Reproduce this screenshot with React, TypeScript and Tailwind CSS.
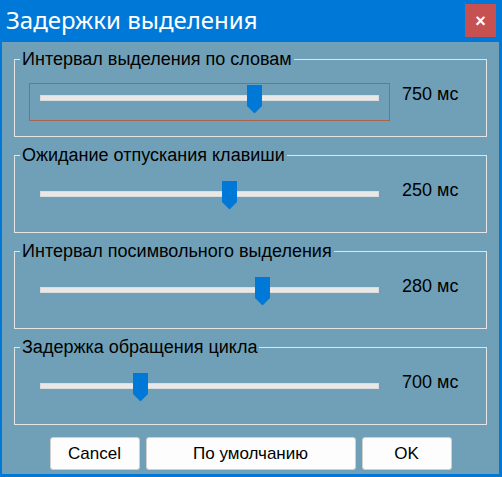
import React from "react";

const groups = [
  { label: "Интервал выделения по словам", value: "750 мс", thumb: 218, focused: true },
  { label: "Ожидание отпускания клавиши", value: "250 мс", thumb: 193, focused: false },
  { label: "Интервал посимвольного выделения", value: "280 мс", thumb: 226, focused: false },
  { label: "Задержка обращения цикла", value: "700 мс", thumb: 104, focused: false },
];

function Thumb() {
  return (
    <svg width="15" height="28" viewBox="0 0 15 28" className="block">
      <polygon points="0,0 15,0 15,21 8,28 7,28 0,21" fill="#0078d7" />
    </svg>
  );
}

function FocusRect() {
  return (
    <div className="absolute inset-0 pointer-events-none">
      <div className="absolute left-0 top-0 w-full h-px bg-[repeating-linear-gradient(90deg,#d65a1e_0px,#d65a1e_1px,#a8644a_1px,#a8644a_2px)]" />
      <div className="absolute left-0 bottom-0 w-full h-px bg-[repeating-linear-gradient(90deg,#d65a1e_0px,#d65a1e_1px,#a8644a_1px,#a8644a_2px)]" />
      <div className="absolute left-0 top-0 h-full w-px bg-[repeating-linear-gradient(180deg,#d65a1e_0px,#d65a1e_1px,#a8644a_1px,#a8644a_2px)]" />
      <div className="absolute right-0 top-0 h-full w-px bg-[repeating-linear-gradient(180deg,#d65a1e_0px,#d65a1e_1px,#a8644a_1px,#a8644a_2px)]" />
    </div>
  );
}

function Group({ label, value, thumb, focused }: { label: string; value: string; thumb: number; focused: boolean }) {
  return (
    <div className="h-[78px] border border-[#e4e4e4] flex flex-col">
      <span className="-mt-[11px] ml-[5px] self-start px-[2px] bg-[#6fa0b8] text-[18px] leading-[20px] text-black">
        {label}
      </span>
      <div className="mt-[14px] ml-[14px] flex items-start">
        <div className="relative w-[361px] h-[38px]">
          <div className="absolute left-[11px] top-[12px] w-[339px] h-[6px] bg-[#e7e9e9] border border-[#dadcdc]" />
          <div className="absolute top-[2px]" style={{ left: thumb }}>
            <Thumb />
          </div>
          {focused && <FocusRect />}
        </div>
        <span className="ml-[12px] mt-[1px] text-[18px] leading-[20px] text-black">{value}</span>
      </div>
    </div>
  );
}

export default function App() {
  return (
    <div
      className="w-[502px] h-[477px] bg-[#0078d7] flex flex-col"
      style={{ fontFamily: '"Liberation Sans", Arial, sans-serif' }}
    >
      <div className="h-[42px] flex items-start justify-between">
        <span
          className="ml-[6px] mt-[4px] text-white text-[24px] leading-[32px]"
          style={{ fontFamily: '"Noto Sans", "Open Sans", sans-serif' }}
        >
          Задержки выделения
        </span>
        <div className="mt-[4px] mr-[6px] w-[31px] h-[33px] bg-[#c75050] flex items-center justify-center text-white text-[18px] font-bold leading-none">
          ×
        </div>
      </div>
      <div className="flex-1 ml-[2px] mr-[3px] mb-[3px] bg-[#6fa0b8] flex flex-col px-[12px] pt-[17px]">
        <div className="flex flex-col gap-[18px]">
          {groups.map((g) => (
            <Group key={g.label} {...g} />
          ))}
        </div>
        <div className="mt-[12px] flex justify-center gap-[6px]">
          <button className="w-[90px] h-[33px] bg-[#fdfdfd] border border-[#d0d0d0] rounded-[3px] text-[17px] text-black">
            Cancel
          </button>
          <button className="w-[210px] h-[33px] bg-[#fdfdfd] border border-[#d0d0d0] rounded-[3px] text-[17px] text-black">
            По умолчанию
          </button>
          <button className="w-[90px] h-[33px] bg-[#fdfdfd] border border-[#d0d0d0] rounded-[3px] text-[17px] text-black">
            OK
          </button>
        </div>
      </div>
    </div>
  );
}
